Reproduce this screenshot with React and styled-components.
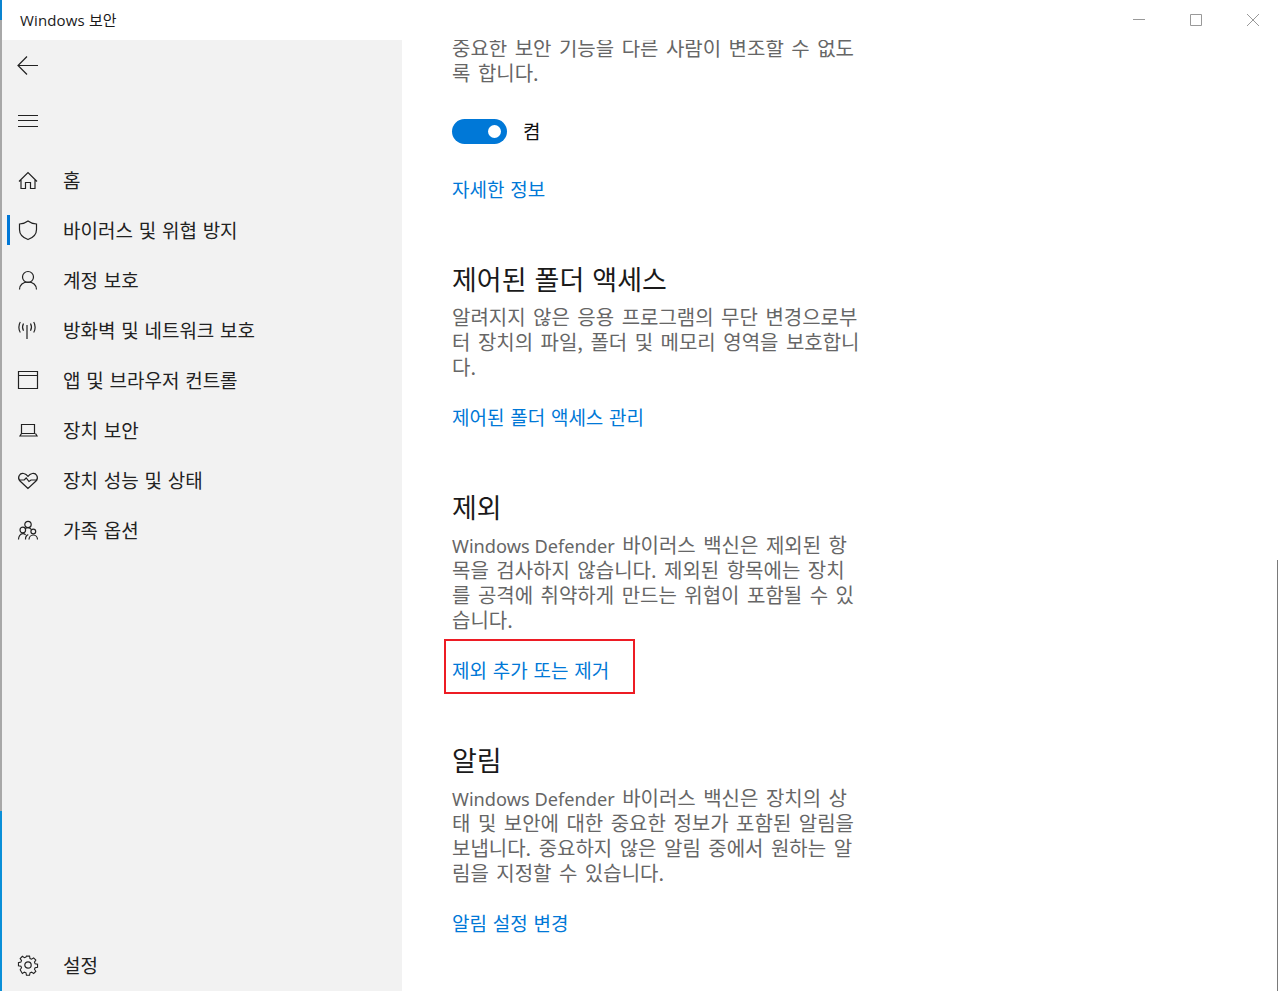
import styled, { createGlobalStyle } from "styled-components";

const GlobalStyle = createGlobalStyle`
    html, body {
        margin: 0;
        padding: 0;
        background: #fff;
    }
    body {
        font-family: "Noto Sans CJK KR", "Noto Sans", sans-serif;
    }
`;

const ICON_PATHS = {
    home: <path d="M1 11.500 10 2.500l9 9M3 9.500V18.500h4.500v-6h5v6H17V9.500" />,
    shield: <path d="M10 1c2.500 2 5.300 2.800 8.500 3v5.500c0 4.800-3.400 8.200-8.500 10-5.100-1.800-8.500-5.200-8.500-10V4C4.700 3.800 7.500 3 10 1Z" />,
    person: <><circle cx="10" cy="7" r="5.500" /><path d="M1.500 19.500c0-4.500 3.500-7.500 8.500-7.500s8.500 3 8.500 7.500" /></>,
    antenna: <path d="M9 5V19M5.500 3.500c-1.100 2-1.100 5.200 0 7.200M12.500 3.500c1.100 2 1.100 5.200 0 7.200M2.300 2C.4 4.800.4 10 2.300 12.500M15.700 2c1.900 2.800 1.900 8 0 10.500" />,
    browser: <path d="M.500 1.500h19v17H.500ZM.500 5.500h19" />,
    laptop: <path d="M3.500 4.500h13v9h-13ZM3.500 13.500 2 16h17l-1.500-2.500" />,
    heart: <path d="M10 18.500 2 11C-1.300 7.300 2 2.500 5.800 3.500c1.800.4 3.200 1.500 4.200 2.800C11 5 12.400 3.900 14.200 3.500 18 2.500 21.300 7.300 18 11L10 18.500ZM.5 10h5.700l2-2 2.800 3.500 2-1.500h6.500" />,
    family: <><circle cx="10" cy="4.500" r="3.200" /><circle cx="4.800" cy="10" r="2.800" /><circle cx="15.300" cy="11.500" r="2.400" /><path d="M.5 19.500c0-3 1.700-5.800 4.300-5.800 1.200 0 2.100.4 2.800 1.200M7 9c.7-.8 1.800-1.300 3-1.300 1.400 0 2.600.7 3.300 1.800M7.500 19.500c0-2.500 1-4.300 2.800-4.800M11 19.500c0-2.500 1.800-4.500 4.300-4.500s4.200 2 4.200 4.500" /></>,
    gear: <><circle cx="10" cy="10" r="3.200" /><path d="M8.300.800h3.400l.5 2.700 1.700.7 2.300-1.500 2.400 2.400-1.500 2.300.7 1.700 2.700.5v3.400l-2.700.5-.7 1.700 1.500 2.300-2.400 2.400-2.300-1.500-1.700.7-.5 2.700H8.300l-.5-2.700-1.700-.7-2.300 1.500L1.400 15.800l1.500-2.300-.7-1.700L-.5 11.300V7.900l2.700-.5.7-1.700L1.400 3.400 3.800 1 6.100 2.500l1.700-.7Z" transform="translate(.9 .4) scale(.91)" /></>,
};

const NAV_ITEMS = [
    { icon: "home", label: "홈" },
    { icon: "shield", label: "바이러스 및 위협 방지", active: true },
    { icon: "person", label: "계정 보호" },
    { icon: "antenna", label: "방화벽 및 네트워크 보호" },
    { icon: "browser", label: "앱 및 브라우저 컨트롤" },
    { icon: "laptop", label: "장치 보안" },
    { icon: "heart", label: "장치 성능 및 상태" },
    { icon: "family", label: "가족 옵션" },
];

const NavIcon = ({ name }) => (
    <IconSvg viewBox="0 0 20 20">{ICON_PATHS[name]}</IconSvg>
);

const App = () => {
    return (
        <>
            <GlobalStyle />
            <Window>
                <EdgeStrip />
                <Main>
                    <TitleBar>
                        <AppTitle>Windows 보안</AppTitle>
                        <WindowButtons>
                            <WindowButton>
                                <svg width="12" height="12" viewBox="0 0 12 12"><path d="M0 5.500h12" /></svg>
                            </WindowButton>
                            <WindowButton>
                                <svg width="12" height="12" viewBox="0 0 12 12"><path d="M.5.5h11v11H.5Z" /></svg>
                            </WindowButton>
                            <WindowButton>
                                <svg width="12" height="12" viewBox="0 0 12 12"><path d="M0 0l12 12M12 0 0 12" /></svg>
                            </WindowButton>
                        </WindowButtons>
                    </TitleBar>
                    <Body>
                        <Sidebar>
                            <BackRow>
                                <IconSvg viewBox="0 0 20 20"><path d="M0 9.500h20M9 .5 0 9.500l9 9" /></IconSvg>
                            </BackRow>
                            <MenuRow>
                                <IconSvg viewBox="0 0 20 20"><path d="M0 4.500h20M0 9.500h20M0 15.500h20" /></IconSvg>
                            </MenuRow>
                            <NavList>
                                {NAV_ITEMS.map((item) => (
                                    <NavItem key={item.label} $active={item.active}>
                                        <NavIcon name={item.icon} />
                                        <NavLabel>{item.label}</NavLabel>
                                    </NavItem>
                                ))}
                            </NavList>
                            <SettingsItem>
                                <NavIcon name="gear" />
                                <NavLabel>설정</NavLabel>
                            </SettingsItem>
                        </Sidebar>
                        <Content>
                            <Inner>
                                <Paragraph>
                                    중요한 보안 기능을 다른 사람이 변조할 수 없도<br />
                                    록 합니다.
                                </Paragraph>
                                <ToggleRow>
                                    <Toggle><Knob /></Toggle>
                                    <ToggleLabel>켬</ToggleLabel>
                                </ToggleRow>
                                <LinkText>자세한 정보</LinkText>

                                <Section>
                                    <Heading>제어된 폴더 액세스</Heading>
                                    <Paragraph>
                                        알려지지 않은 응용 프로그램의 무단 변경으로부<br />
                                        터 장치의 파일, 폴더 및 메모리 영역을 보호합니<br />
                                        다.
                                    </Paragraph>
                                    <SectionLink>제어된 폴더 액세스 관리</SectionLink>
                                </Section>

                                <Section>
                                    <Heading>제외</Heading>
                                    <Paragraph>
                                        <Latin>Windows Defender</Latin> 바이러스 백신은 제외된 항<br />
                                        목을 검사하지 않습니다. 제외된 항목에는 장치<br />
                                        를 공격에 취약하게 만드는 위협이 포함될 수 있<br />
                                        습니다.
                                    </Paragraph>
                                    <SectionLink>
                                        제외 추가 또는 제거
                                        <Highlight />
                                    </SectionLink>
                                </Section>

                                <Section>
                                    <Heading>알림</Heading>
                                    <Paragraph>
                                        <Latin>Windows Defender</Latin> 바이러스 백신은 장치의 상<br />
                                        태 및 보안에 대한 중요한 정보가 포함된 알림을<br />
                                        보냅니다. 중요하지 않은 알림 중에서 원하는 알<br />
                                        림을 지정할 수 있습니다.
                                    </Paragraph>
                                    <SectionLink>알림 설정 변경</SectionLink>
                                </Section>
                            </Inner>
                        </Content>
                    </Body>
                </Main>
                <ScrollLine />
            </Window>
        </>
    );
};

const Window = styled.div`
    position: relative;
    display: flex;
    width: 1278px;
    height: 991px;
    overflow: hidden;
    background: #fff;
`;

const EdgeStrip = styled.div`
    flex: 0 0 2px;
    background: linear-gradient(
        to bottom,
        #0a84d0 0,
        #0a84d0 20px,
        #a8a8a8 20px,
        #a8a8a8 811px,
        #0a8fd8 811px,
        #0a8fd8 100%
    );
`;

const Main = styled.div`
    flex: 1;
    display: flex;
    flex-direction: column;
    min-width: 0;
`;

const TitleBar = styled.div`
    position: relative;
    z-index: 1;
    flex: 0 0 40px;
    display: flex;
    align-items: center;
    justify-content: space-between;
    background: #fff;
    padding-left: 18px;
`;

const AppTitle = styled.div`
    font-size: 15px;
    color: #1a1a1a;
    font-family: "Open Sans", "Noto Sans CJK KR", sans-serif;
    letter-spacing: 0.15px;
    margin-top: -2px;
`;

const WindowButtons = styled.div`
    display: flex;
    align-items: center;
    margin-right: -3px;
`;

const WindowButton = styled.div`
    width: 57px;
    height: 40px;
    display: flex;
    align-items: center;
    justify-content: center;

    svg {
        fill: none;
        stroke: #999;
        stroke-width: 1;
    }
`;

const Body = styled.div`
    flex: 1;
    display: flex;
    min-height: 0;
`;

const Sidebar = styled.div`
    flex: 0 0 400px;
    display: flex;
    flex-direction: column;
    background: #f2f2f2;
`;

const IconSvg = styled.svg`
    flex: 0 0 20px;
    width: 20px;
    height: 20px;
    overflow: visible;
    fill: none;
    stroke: #222;
    stroke-width: 1.2;
`;

const BackRow = styled.div`
    height: 51px;
    display: flex;
    align-items: center;
    padding-left: 16px;
`;

const MenuRow = styled(BackRow)`
    height: 59px;
`;

const NavList = styled.div`
    display: flex;
    flex-direction: column;
    margin-top: 5px;
`;

const NavItem = styled.div`
    position: relative;
    height: 50px;
    display: flex;
    align-items: center;
    padding-left: 16px;
    gap: 25px;

    ${(p) => p.$active && `
        &::before {
            content: "";
            position: absolute;
            left: 5px;
            top: 10px;
            width: 3px;
            height: 30px;
            background: #0078d7;
        }
    `}
`;

const SettingsItem = styled(NavItem)`
    margin-top: auto;
    margin-bottom: 1px;
`;

const NavLabel = styled.span`
    font-size: 19px;
    line-height: 25px;
    color: #222;
    white-space: nowrap;
    word-spacing: 1.5px;
    margin-top: -1px;
`;

const Content = styled.div`
    flex: 1;
    min-width: 0;
    overflow: hidden;
`;

const Inner = styled.div`
    margin-top: -5px;
    padding-left: 50px;
`;

const Paragraph = styled.p`
    margin: 0;
    font-size: 20px;
    line-height: 25px;
    color: #666;
    white-space: nowrap;
    word-spacing: 3px;
`;

const Latin = styled.span`
    font-family: "Noto Sans", sans-serif;
    font-size: 18.2px;
    line-height: 0;
    word-spacing: 0;
`;

const ToggleRow = styled.div`
    display: flex;
    align-items: center;
    gap: 16px;
    margin-top: 34px;
    height: 25px;
`;

const Toggle = styled.div`
    width: 55px;
    height: 25px;
    border-radius: 13px;
    background: #0078d7;
    display: flex;
    align-items: center;
    justify-content: flex-end;
    padding-right: 6px;
    box-sizing: border-box;
`;

const Knob = styled.div`
    width: 13px;
    height: 13px;
    border-radius: 50%;
    background: #fff;
`;

const ToggleLabel = styled.span`
    font-size: 19px;
    line-height: 25px;
    color: #111;
    margin-top: -2px;
`;

const LinkText = styled.div`
    position: relative;
    margin-top: 32px;
    font-size: 19px;
    line-height: 25px;
    color: #0078d7;
    white-space: nowrap;
    word-spacing: 1.5px;
`;

const Section = styled.section`
    margin-top: 61px;
`;

const Heading = styled.h2`
    margin: 0 0 8px;
    font-size: 27px;
    line-height: 34px;
    font-weight: 400;
    color: #1a1a1a;
    word-spacing: 2px;
`;

const SectionLink = styled(LinkText)`
    margin-top: 25px;
`;

const Highlight = styled.div`
    position: absolute;
    left: -8px;
    top: -18px;
    width: 191px;
    height: 55px;
    box-sizing: border-box;
    border: 2px solid #ed1c24;
`;

const ScrollLine = styled.div`
    position: absolute;
    right: 0;
    top: 560px;
    bottom: 0;
    width: 1px;
    background: #7a7a7a;
`;

export default App;
